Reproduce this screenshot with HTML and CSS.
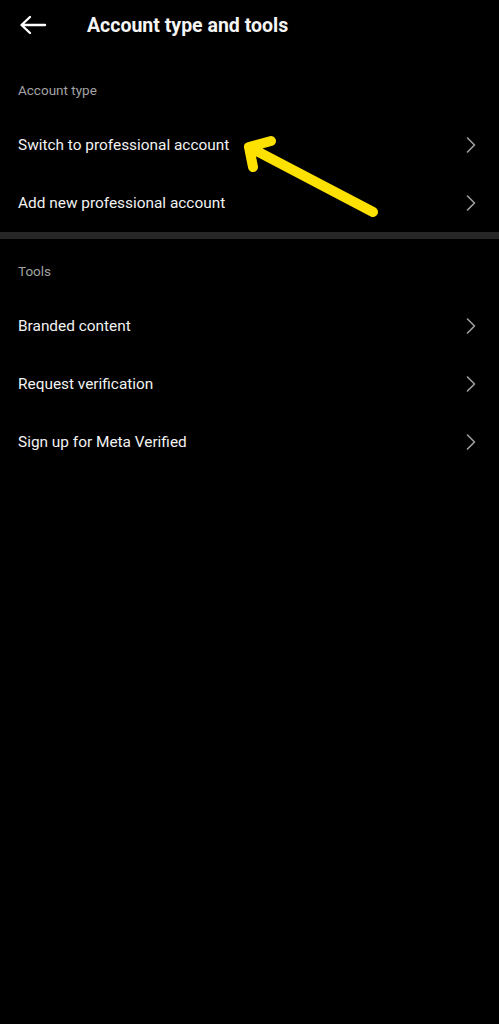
FILE: index.html
```html
<!DOCTYPE html>
<html lang="en">
<head>
<meta charset="utf-8">
<title>Account type and tools</title>
<link rel="stylesheet" href="styles.css">
</head>
<body>
<div class="screen">
  <header class="topbar">
    <svg class="back" width="28" height="20" viewBox="0 0 28 20" aria-hidden="true">
      <path d="M26 10 H3 M11 2 L2.5 10 L11 18" fill="none" stroke="#fff" stroke-width="2.4" stroke-linecap="round" stroke-linejoin="round"/>
    </svg>
    <h1 class="title">Account type and tools</h1>
  </header>

  <section class="group">
    <div class="label">Account type</div>
    <div class="row"><span>Switch to professional account</span><svg class="chev" width="10" height="16" viewBox="0 0 10 16"><path d="M1.5 1 L8.5 8 L1.5 15" fill="none" stroke="#a0a0a0" stroke-width="1.6" stroke-linecap="round" stroke-linejoin="round"/></svg></div>
    <div class="row"><span>Add new professional account</span><svg class="chev" width="10" height="16" viewBox="0 0 10 16"><path d="M1.5 1 L8.5 8 L1.5 15" fill="none" stroke="#a0a0a0" stroke-width="1.6" stroke-linecap="round" stroke-linejoin="round"/></svg></div>
  </section>

  <div class="divider"></div>

  <section class="group">
    <div class="label">Tools</div>
    <div class="row"><span>Branded content</span><svg class="chev" width="10" height="16" viewBox="0 0 10 16"><path d="M1.5 1 L8.5 8 L1.5 15" fill="none" stroke="#a0a0a0" stroke-width="1.6" stroke-linecap="round" stroke-linejoin="round"/></svg></div>
    <div class="row"><span>Request verification</span><svg class="chev" width="10" height="16" viewBox="0 0 10 16"><path d="M1.5 1 L8.5 8 L1.5 15" fill="none" stroke="#a0a0a0" stroke-width="1.6" stroke-linecap="round" stroke-linejoin="round"/></svg></div>
    <div class="row"><span>Sign up for Meta Verified</span><svg class="chev" width="10" height="16" viewBox="0 0 10 16"><path d="M1.5 1 L8.5 8 L1.5 15" fill="none" stroke="#a0a0a0" stroke-width="1.6" stroke-linecap="round" stroke-linejoin="round"/></svg></div>
  </section>

  <svg class="pointer" width="499" height="260" viewBox="0 0 499 260" aria-hidden="true">
    <path d="M373 212 L249 147 M271 141 L249 147 L253 167" fill="none" stroke="#fde100" stroke-width="10" stroke-linecap="round" stroke-linejoin="round"/>
  </svg>
</div>
</body>
</html>
```

FILE: styles.css
```css
html, body {
  margin: 0;
  padding: 0;
  background: #000;
}

.screen {
  position: relative;
  width: 499px;
  min-height: 1024px;
  background: #000;
  font-family: Roboto, "Noto Sans", "Liberation Sans", sans-serif;
  color: #f2f2f2;
}

.topbar {
  height: 50px;
  display: flex;
  align-items: center;
  padding: 0 0 0 19px;
  gap: 40px;
}

.back {
  display: block;
  flex: none;
}

.title {
  margin: 0;
  font-size: 19.5px;
  font-weight: 700;
  color: #f5f5f5;
  letter-spacing: 0;
}

.group {
  display: flex;
  flex-direction: column;
}

.label {
  padding: 31px 18px 17px;
  line-height: 18px;
  font-size: 13.5px;
  color: #a3a3a3;
}

.divider + .group .label {
  padding-top: 23px;
}

.row {
  height: 58px;
  display: flex;
  align-items: center;
  justify-content: space-between;
  padding: 0 23px 0 18px;
  font-size: 15.4px;
  color: #f2f2f2;
}

.chev {
  display: block;
  flex: none;
}

.divider {
  height: 7px;
  background: #262626;
}

.pointer {
  position: absolute;
  left: 0;
  top: 0;
  pointer-events: none;
}
```
